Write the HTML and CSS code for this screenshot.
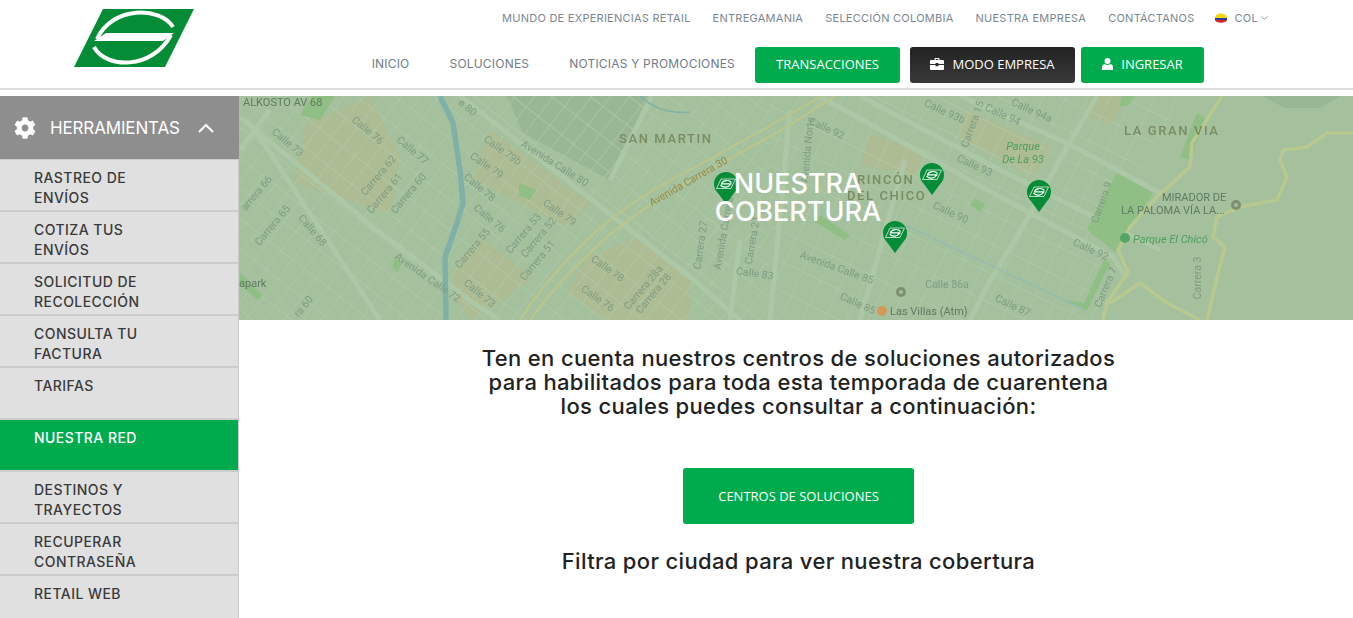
FILE: index.html
```html
<!DOCTYPE html>
<html lang="es">
<head>
    <meta charset="UTF-8">
    <meta name="viewport" content="width=device-width, initial-scale=1.0">
    <title>Nuestra Cobertura</title>
    <link rel="stylesheet" href="styles.css">
</head>
<body>
    <svg class="defs" width="0" height="0">
        <symbol id="gear" viewBox="0 0 512 512">
            <path d="M487.4 315.7l-42.6-24.6c4.3-23.2 4.3-47 0-70.2l42.6-24.6c4.9-2.8 7.1-8.6 5.5-14-11.1-35.6-30-67.8-54.7-94.6-3.8-4.1-10-5.1-14.8-2.3L380.8 110c-17.9-15.4-38.5-27.3-60.8-35.1V25.8c0-5.6-3.9-10.5-9.4-11.7-36.7-8.2-74.3-7.8-109.2 0-5.5 1.2-9.4 6.1-9.4 11.7V75c-22.2 7.9-42.8 19.8-60.8 35.1L88.7 85.5c-4.9-2.8-11-1.9-14.8 2.3-24.7 26.7-43.6 58.9-54.7 94.6-1.7 5.4.6 11.2 5.5 14L67.3 221c-4.3 23.2-4.3 47 0 70.2l-42.6 24.6c-4.9 2.8-7.1 8.6-5.5 14 11.1 35.6 30 67.8 54.7 94.6 3.8 4.1 10 5.1 14.8 2.3l42.6-24.6c17.9 15.4 38.5 27.3 60.8 35.1v49.2c0 5.6 3.9 10.5 9.4 11.7 36.7 8.2 74.3 7.8 109.2 0 5.5-1.2 9.4-6.1 9.4-11.7v-49.2c22.2-7.9 42.8-19.8 60.8-35.1l42.6 24.6c4.9 2.8 11 1.9 14.8-2.3 24.7-26.7 43.6-58.9 54.7-94.6 1.5-5.5-.7-11.3-5.6-14.1zM256 336c-44.1 0-80-35.9-80-80s35.9-80 80-80 80 35.9 80 80-35.9 80-80 80z"/>
        </symbol>
        <!-- pin del mapa, la punta queda abajo al centro -->
        <symbol id="pin" viewBox="0 0 24 32">
            <path d="M12 32 L3.5 20.5 A12 12 0 1 1 20.5 20.5 Z" fill="#058c37"/>
            <path d="M7 7 H21.5 L17 16.5 H2.5 Z" fill="none" stroke="#fff" stroke-width=".7"/>
            <path d="M7 11.8 H17.5 M17.5 10.5 C15 7.5 9 8 7.5 11.5 M6.5 13 C9 16 14.5 16 17 11.5" fill="none" stroke="#fff" stroke-width="1.2"/>
        </symbol>
    </svg>

    <header class="topbar">
        <a class="logo" href="#">
            <svg width="120" height="58" viewBox="74 9 120 58">
                <path d="M103 9 H194 L165 67 H74 Z" fill="#058c37"/>
                <path d="M106 33 H174 L163 41 H94 Z" fill="#fff"/>
                <path d="M173 27 C160 6 112 6 97 39 M94 47 C106 69 152 70 171 35" fill="none" stroke="#fff" stroke-width="4"/>
            </svg>
        </a>
        <nav class="menus">
            <ul class="menu-top">
                <li>MUNDO DE EXPERIENCIAS RETAIL</li>
                <li>ENTREGAMANIA</li>
                <li>SELECCIÓN COLOMBIA</li>
                <li>NUESTRA EMPRESA</li>
                <li>CONTÁCTANOS</li>
                <li class="country">
                    <svg width="12" height="10" viewBox="0 0 12 10">
                        <path d="M0 5 C0 -1 12 -1 12 5 Z" fill="#f5d90a"/>
                        <path d="M0 5 H12 V7 H0 Z" fill="#2b3f9e"/>
                        <path d="M0 7 H12 C11 10.5 1 10.5 0 7 Z" fill="#d8232a"/>
                    </svg>
                    <span>COL</span>
                    <svg width="7" height="4" viewBox="0 0 7 4"><path d="M.5 .5 L3.5 3.2 L6.5 .5" fill="none" stroke="#7a8791" stroke-width=".8"/></svg>
                </li>
            </ul>
            <div class="menu-main">
                <a class="link" href="#">INICIO</a>
                <a class="link" href="#">SOLUCIONES</a>
                <a class="link" href="#">NOTICIAS Y PROMOCIONES</a>
                <a class="btn btn-tx" href="#">TRANSACCIONES</a>
                <a class="btn btn-dark" href="#">
                    <svg width="14" height="12" viewBox="0 0 14 12"><path d="M4.5 2 V.8 Q4.5 0 5.3 0 H8.7 Q9.5 0 9.5 .8 V2 H13 Q14 2 14 3 V6 H8.5 V5 H5.5 V6 H0 V3 Q0 2 1 2 Z M5.7 1.1 V2 H8.3 V1.1 Z M0 7 H5.5 V8.2 H8.5 V7 H14 V11 Q14 12 13 12 H1 Q0 12 0 11 Z" fill="#fff" fill-rule="evenodd"/></svg>
                    MODO EMPRESA
                </a>
                <a class="btn btn-in" href="#">
                    <svg width="11" height="12" viewBox="0 0 11 12"><circle cx="5.5" cy="3" r="3"/><path d="M0 12 V9 Q0 6.5 2.5 6 Q5.5 8 8.5 6 Q11 6.5 11 9 V12 Z"/></svg>
                    INGRESAR
                </a>
            </div>
        </nav>
    </header>

    <div class="layout">
        <aside class="sidebar">
            <div class="side-head">
                <svg class="gear" width="22" height="22"><use href="#gear"/></svg>
                <span>HERRAMIENTAS</span>
                <svg width="16" height="10" viewBox="0 0 16 10"><path d="M1 9 L8 2 L15 9" fill="none" stroke="#fff" stroke-width="2"/></svg>
            </div>
            <ul class="side-list">
                <li>RASTREO DE<br>ENVÍOS</li>
                <li>COTIZA TUS<br>ENVÍOS</li>
                <li>SOLICITUD DE<br>RECOLECCIÓN</li>
                <li>CONSULTA TU<br>FACTURA</li>
                <li>TARIFAS</li>
                <li class="active">NUESTRA RED</li>
                <li>DESTINOS Y<br>TRAYECTOS</li>
                <li>RECUPERAR<br>CONTRASEÑA</li>
                <li>RETAIL WEB</li>
            </ul>
        </aside>

        <main class="content">
            <section class="hero">
                <svg class="map" width="1114" height="224" viewBox="239 96 1114 224">
                    <defs>
                        <pattern id="gridW" width="15" height="24" patternUnits="userSpaceOnUse" patternTransform="rotate(38)">
                            <path d="M0 0 H15 M0 0 V24" fill="none" stroke="#afcaa9" stroke-width="1.3"/>
                        </pattern>
                        <pattern id="gridE" width="20" height="27" patternUnits="userSpaceOnUse" patternTransform="rotate(26)">
                            <path d="M0 0 H20 M0 0 V27" fill="none" stroke="#afcaa9" stroke-width="1.3"/>
                        </pattern>
                    </defs>
                    <rect x="239" y="96" width="1114" height="224" fill="#a4c09d"/>

                    <!-- zonas -->
                    <g fill="#99b695">
                        <path d="M507 96 H650 L610 180 L523 133 Z"/>
                        <path d="M1262 96 H1340 L1320 108 H1285 Z"/>
                    </g>
                    <g fill="#aebc94">
                        <path d="M307 123 L370 97 L400 157 L390 213 L293 183 Z"/>
                        <path d="M490 130 L590 203 L567 227 L507 197 L473 177 Z"/>
                        <path d="M453 270 L480 237 L533 277 L473 320 L453 297 Z"/>
                        <path d="M587 257 L640 237 L690 277 L690 320 L607 320 L567 293 Z"/>
                        <path d="M965 110 L1053 147 L1033 177 L960 140 Z"/>
                        <path d="M870 135 L925 150 L915 175 L860 165 Z"/>
                        <path d="M1090 96 H1125 L1110 125 L1085 115 Z"/>
                    </g>

                    <!-- calles -->
                    <rect x="239" y="96" width="530" height="224" fill="url(#gridW)"/>
                    <path d="M769 96 H1180 L1125 200 L1105 320 H769 Z" fill="url(#gridE)"/>

                    <!-- avenidas -->
                    <g fill="none" stroke="#acc8a6" stroke-width="5">
                        <path d="M460 96 L690 277 L740 320"/>
                        <path d="M240 117 L373 227 L473 303 L500 320"/>
                        <path d="M257 133 L380 320"/>
                        <path d="M270 110 L240 150"/>
                        <path d="M1097 96 L1067 147 L1025 223 L985 290 L970 320"/>
                        <path d="M860 96 L1000 170 L1160 250"/>
                        <path d="M960 96 L1067 143 L1160 193"/>
                        <path d="M790 110 L770 320"/>
                        <path d="M740 240 L730 320"/>
                        <path d="M652 96 L610 180"/>
                        <path d="M905 160 L860 320"/>
                        <path d="M1000 197 L1113 257 L1125 275"/>
                        <path d="M820 96 L1000 197"/>
                    </g>

                    <!-- parques -->
                    <g fill="#8fbf84">
                        <path d="M1117 173 L1153 193 L1133 223 L1117 253 L1087 230 L1107 190 Z"/>
                        <path d="M1180 157 L1197 113 L1205 118 L1190 160 Z"/>
                        <path d="M1065 300 L1087 310 L1110 263 L1104 260 L1084 303 Z"/>
                        <path d="M519 183 L536 190 L530 200 L519 196 Z"/>
                        <path d="M312 96 L335 96 L320 120 L300 115 Z"/>
                        <path d="M395 258 L403 262 L398 272 L392 268 Z"/>
                        <path d="M240 272 L262 295 L258 300 L240 285 Z"/>
                        <path d="M1121 96 H1135 L1128 106 H1120 Z"/>
                        <path d="M820 215 L850 235 L845 240 L815 222 Z"/>
                        <path d="M975 198 L985 205 L980 212 L970 205 Z"/>
                    </g>

                    <!-- rio -->
                    <path d="M440 96 L453 123 L460 170 L463 203 L457 223 L445 257 L446 320" fill="none" stroke="#7fb1a9" stroke-width="5.5"/>
                    <path d="M640 96 Q660 115 690 112" fill="none" stroke="#7fb1a9" stroke-width="1.5"/>
                    <path d="M905 225 L1085 310" fill="none" stroke="#8fbcb4" stroke-width="1.2"/>

                    <!-- vias amarillas -->
                    <g fill="none" stroke="#b8c58d" stroke-width="2.5">
                        <path d="M520 320 Q545 280 590 237 Q630 200 690 170 L780 120 L822 96"/>
                        <path d="M530 320 Q555 285 598 245 Q640 208 695 178 L785 128 L835 96"/>
                    </g>
                    <g fill="none" stroke="#b8c98f" stroke-width="3.5">
                        <path d="M1222 96 L1192 143 L1190 167 L1157 197 L1130 227 L1118 250 L1128 272 L1107 303 L1103 320"/>
                        <path d="M1353 133 L1327 133 L1307 147 L1283 150 L1280 160 L1287 177 L1277 200 L1240 207 L1217 217 L1213 237 L1225 247 L1217 277 L1207 320"/>
                        <path d="M1110 303 L1140 283 L1167 303 L1200 320"/>
                    </g>

                    <!-- nombres de calles -->
                    <g class="lb">
                        <text transform="rotate(40 288 142)" x="288" y="146">Calle 73</text>
                        <text transform="rotate(40 368 130)" x="368" y="134">Calle 76</text>
                        <text transform="rotate(40 413 150)" x="413" y="154">Calle 77</text>
                        <text transform="rotate(-50 378 175)" x="378" y="179">Carrera 62</text>
                        <text transform="rotate(-50 384 193)" x="384" y="197">Carrera 61</text>
                        <text transform="rotate(-50 408 193)" x="408" y="197">Carrera 60</text>
                        <text transform="rotate(-50 256 193)" x="256" y="197">arrera 66</text>
                        <text transform="rotate(-50 272 225)" x="272" y="229">Carrera 65</text>
                        <text transform="rotate(50 313 230)" x="313" y="234">Calle 68</text>
                        <text transform="rotate(35 428 277)" x="428" y="281">Avenida Calle 72</text>
                        <text transform="rotate(-50 303 306)" x="303" y="310">ra 60</text>
                        <text transform="rotate(40 468 107)" x="468" y="111">e 80</text>
                        <text transform="rotate(35 503 150)" x="503" y="154">Calle 79b</text>
                        <text transform="rotate(32 555 163)" x="555" y="167">Avenida Calle 80</text>
                        <text transform="rotate(35 487 165)" x="487" y="169">Calle 79</text>
                        <text transform="rotate(40 480 187)" x="480" y="191">Calle 78</text>
                        <text transform="rotate(40 490 218)" x="490" y="222">Calle 76</text>
                        <text transform="rotate(35 560 212)" x="560" y="216">Calle 79</text>
                        <text transform="rotate(-50 472 248)" x="472" y="252">Carrera 55</text>
                        <text transform="rotate(-50 523 233)" x="523" y="237">Carrera 53</text>
                        <text transform="rotate(-50 538 237)" x="538" y="241">Carrera 52</text>
                        <text transform="rotate(-50 537 260)" x="537" y="264">Carrera 51</text>
                        <text transform="rotate(40 480 293)" x="480" y="297">Calle 73</text>
                        <text transform="rotate(35 608 268)" x="608" y="272">Calle 78</text>
                        <text transform="rotate(35 598 298)" x="598" y="302">Calle 76</text>
                        <text transform="rotate(-50 643 287)" x="643" y="291">Carrera 28a</text>
                        <text transform="rotate(-50 653 293)" x="653" y="297">Carrera 28</text>
                        <text transform="rotate(-82 700 245)" x="700" y="249">Carrera 27</text>
                        <text transform="rotate(-80 723 233)" x="723" y="237">Avenida Carrera</text>
                        <text transform="rotate(-80 752 240)" x="752" y="244">Carrera 21</text>
                        <text transform="rotate(-85 807 150)" x="807" y="154">Avenida Norte</text>
                        <text transform="rotate(8 755 273)" x="755" y="277">Calle 83</text>
                        <text transform="rotate(20 837 267)" x="837" y="271">Avenida Calle 85</text>
                        <text transform="rotate(25 951 212)" x="951" y="216">Calle 90</text>
                        <text transform="rotate(25 975 165)" x="975" y="169">Calle 93</text>
                        <text transform="rotate(25 827 128)" x="827" y="132">Calle 92</text>
                        <text transform="rotate(25 1032 110)" x="1032" y="114">Calle 94a</text>
                        <text transform="rotate(25 1003 114)" x="1003" y="118">Calle 94</text>
                        <text transform="rotate(25 945 111)" x="945" y="115">Calle 93b</text>
                        <text transform="rotate(-70 972 124)" x="972" y="128">Carrera 15</text>
                        <text transform="rotate(-70 1101 202)" x="1101" y="206">Carrera 9</text>
                        <text transform="rotate(25 1091 249)" x="1091" y="253">Calle 92</text>
                        <text transform="rotate(-68 1105 287)" x="1105" y="291">Carrera 7</text>
                        <text transform="rotate(25 1013 305)" x="1013" y="309">Calle 87</text>
                        <text transform="rotate(25 858 303)" x="858" y="307">Calle 85</text>
                        <text x="947" y="288">Calle 86a</text>
                        <text transform="rotate(-90 1197 278)" x="1197" y="282">Carrera 3</text>
                    </g>
                    <text class="lb-road" transform="rotate(-30 688 181)" x="688" y="185">Avenida Carrera 30</text>

                    <!-- barrios -->
                    <g class="lb-zone">
                        <text x="619" y="143">SAN MARTIN</text>
                        <text x="1124" y="135">LA GRAN VIA</text>
                        <text x="857" y="184">RINCÓN</text>
                        <text x="847" y="200">DEL CHICO</text>
                    </g>
                    <g class="lb-place">
                        <text x="243" y="106">ALKOSTO AV 68</text>
                        <text x="239" y="287">apark</text>
                        <text x="1162" y="201">MIRADOR DE</text>
                        <text x="1121" y="214">LA PALOMA VÍA LA...</text>
                        <text x="890" y="315">Las Villas (Atm)</text>
                    </g>
                    <g class="lb-park">
                        <text x="1023" y="150" text-anchor="middle">Parque</text>
                        <text x="1023" y="163" text-anchor="middle">De La 93</text>
                        <text x="1133" y="243">Parque El Chicó</text>
                    </g>
                    <circle cx="1125" cy="238" r="5" fill="#55a566"/>
                    <circle cx="1236" cy="205" r="5" fill="#7d8f6e"/>
                    <circle cx="1236" cy="205" r="2" fill="#a4c09d"/>
                    <circle cx="901" cy="292" r="5" fill="#7d8f6e"/>
                    <circle cx="901" cy="292" r="2" fill="#a4c09d"/>
                    <circle cx="882" cy="311" r="5" fill="#d49a55"/>
                </svg>
                <svg class="pin pin-a"><use href="#pin"/></svg>
                <svg class="pin pin-b"><use href="#pin"/></svg>
                <svg class="pin pin-c"><use href="#pin"/></svg>
                <svg class="pin pin-d"><use href="#pin"/></svg>
                <h1 class="hero-title">NUESTRA COBERTURA</h1>
            </section>

            <section class="info">
                <p class="notice">Ten en cuenta nuestros centros de soluciones autorizados<br>para habilitados para toda esta temporada de cuarentena<br>los cuales puedes consultar a continuación:</p>
                <a class="btn-centros" href="#">CENTROS DE SOLUCIONES</a>
                <h2>Filtra por ciudad para ver nuestra cobertura</h2>
            </section>
        </main>
    </div>
</body>
</html>
```

FILE: styles.css
```css
* {
    box-sizing: border-box;
}
html, body {
    margin: 0;
    height: 618px;
    overflow: hidden;
}
body {
    font-family: Inter, "Open Sans", sans-serif;
    background-color: #fff;
    color: #222;
}
ul {
    list-style: none;
    margin: 0;
    padding: 0;
}
a {
    text-decoration: none;
}
.defs {
    position: absolute;
}

/* cabecera */
.topbar {
    display: flex;
    justify-content: space-between;
    height: 90px;
    padding-left: 74px;
    border-bottom: 2px solid #ddd;
}
.logo {
    margin-top: 9px;
    height: 58px;
}
.menu-top {
    display: flex;
    justify-content: flex-end;
    align-items: center;
    gap: 22px;
    height: 36px;
    padding-right: 85px;
    font-size: 11px;
    letter-spacing: .25px;
    color: #7a8791;
}
.country {
    display: flex;
    align-items: center;
    gap: 3px;
    margin-left: -2px;
}
.country span {
    margin-left: 5px;
}
.menu-main {
    display: flex;
    justify-content: flex-end;
    align-items: center;
    height: 36px;
    margin-top: 11px;
    padding-right: 149px;
}
.link {
    margin-right: 40px;
    padding-bottom: 3px;
    font-size: 12px;
    letter-spacing: .2px;
    color: #6f7c85;
}
.link:nth-child(3) {
    margin-right: 20px;
}
.btn {
    display: flex;
    align-items: center;
    justify-content: center;
    gap: 8px;
    height: 36px;
    padding-bottom: 2px;
    border-radius: 3px;
    font-family: "Open Sans", sans-serif;
    font-size: 13px;
    color: #fff;
}
.btn-tx, .btn-in {
    background-color: #00ab4e;
}
.btn-tx {
    width: 145px;
    margin-right: 10px;
}
.btn-dark {
    width: 165px;
    margin-right: 6px;
    background: linear-gradient(#222, #3a3a3a);
}
.btn-in {
    width: 123px;
}
.btn-in svg {
    fill: #fff;
}

/* cuerpo */
.layout {
    display: flex;
    margin-top: 6px;
}
.sidebar {
    width: 239px;
    height: 522px;
    flex-shrink: 0;
    background-color: #e0e0e0;
    border-right: 1px solid #ccc;
}
.side-head {
    display: flex;
    align-items: center;
    height: 64px;
    padding-left: 14px;
    margin-right: -1px;
    background-color: #8e8e8e;
    border-bottom: 1px solid #ccc;
    font-size: 17px;
    letter-spacing: -.15px;
    color: #fff;
}
.gear {
    fill: #fff;
    margin-right: 14px;
}
.side-head span {
    margin-right: 18px;
}
.side-list li {
    height: 52px;
    padding: 8px 0 0 34px;
    border-bottom: 2px solid #ccc;
    font-size: 14px;
    line-height: 20px;
    font-weight: 500;
    letter-spacing: .45px;
    color: #3a3a3a;
}
.side-list li.active {
    background-color: #00ab4e;
    color: #fff;
}
.content {
    flex: 1;
    min-width: 0;
}

/* mapa */
.hero {
    position: relative;
    height: 224px;
    overflow: hidden;
}
.map {
    display: block;
    filter: blur(.5px);
}
.lb {
    font-family: Roboto, sans-serif;
    font-size: 10.5px;
    fill: #7f9c84;
    text-anchor: middle;
}
.lb-road {
    font-family: Roboto, sans-serif;
    font-size: 10.5px;
    fill: #8e8a52;
    text-anchor: middle;
}
.lb-zone {
    font-family: Roboto, sans-serif;
    font-size: 13px;
    font-weight: 500;
    letter-spacing: 1.6px;
    fill: #7b8b62;
}
.lb-place {
    font-family: Roboto, sans-serif;
    font-size: 11px;
    fill: #5f7b62;
}
.lb-park {
    font-family: Roboto, sans-serif;
    font-size: 11px;
    font-style: italic;
    fill: #4f9e5e;
}
.pin {
    position: absolute;
    width: 24px;
    height: 32px;
}
.pin-a { left: 475px; top: 76px; }
.pin-b { left: 681px; top: 67px; }
.pin-c { left: 644px; top: 125px; }
.pin-d { left: 788px; top: 84px; }
.hero-title {
    position: absolute;
    left: 464px;
    top: 74px;
    width: 190px;
    margin: 0;
    text-align: center;
    font-size: 27px;
    line-height: 28px;
    font-weight: 500;
    color: #fff;
}

/* texto */
.info {
    display: flex;
    flex-direction: column;
    align-items: center;
    padding-left: 5px;
}
.notice {
    margin: 26px 0 0;
    text-align: center;
    font-size: 22px;
    line-height: 24px;
    font-weight: 500;
    letter-spacing: .35px;
    color: #222;
}
.btn-centros {
    display: flex;
    align-items: center;
    justify-content: center;
    width: 231px;
    height: 56px;
    margin-top: 50px;
    border-radius: 3px;
    background-color: #00ab4e;
    font-family: "Open Sans", sans-serif;
    font-size: 13px;
    color: #fff;
}
.info h2 {
    margin: 23px 0 0;
    font-size: 22px;
    line-height: 28px;
    font-weight: 500;
    letter-spacing: .35px;
    color: #222;
}
```
